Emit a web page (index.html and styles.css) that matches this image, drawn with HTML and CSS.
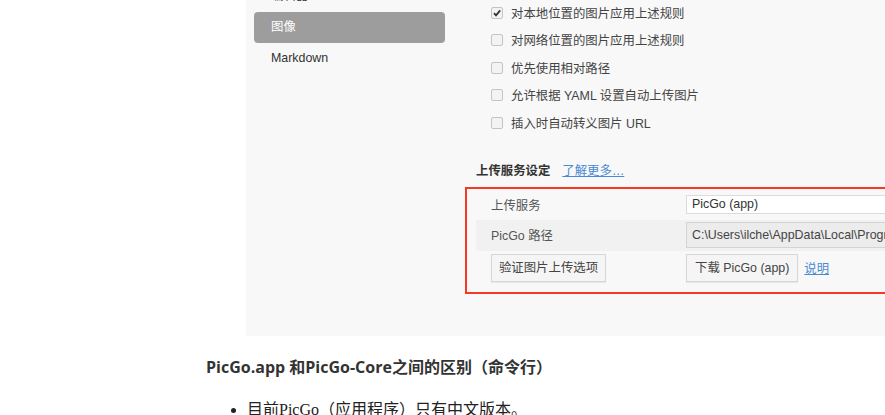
FILE: index.html
```html
<!DOCTYPE html>
<html lang="zh-CN">
<head>
<meta charset="utf-8">
<title>PicGo</title>
<link rel="stylesheet" href="styles.css">
</head>
<body>
<div class="article">
  <div class="shot">
    <div class="side">
      <div class="side-item">编辑器</div>
      <div class="side-item active">图像</div>
      <div class="side-item">Markdown</div>
    </div>
    <div class="main">
      <div class="checks">
        <div class="check-row"><span class="cb checked"><svg viewBox="0 0 12 12" width="12" height="12"><path d="M3 6.2 L5 8.3 L9.2 3.4" fill="none" stroke="#333" stroke-width="1.8"/></svg></span>对本地位置的图片应用上述规则</div>
        <div class="check-row"><span class="cb"></span>对网络位置的图片应用上述规则</div>
        <div class="check-row"><span class="cb"></span>优先使用相对路径</div>
        <div class="check-row"><span class="cb"></span>允许根据 YAML 设置自动上传图片</div>
        <div class="check-row"><span class="cb"></span>插入时自动转义图片 URL</div>
      </div>
      <div class="sec-head"><span class="sec-title">上传服务设定</span><a class="link">了解更多…</a></div>
      <div class="redbox">
        <div class="trow">
          <div class="tlabel">上传服务</div>
          <div class="tval"><div class="select">PicGo (app)</div></div>
        </div>
        <div class="trow alt">
          <div class="tlabel">PicGo 路径</div>
          <div class="tval"><div class="pathbox">C:\Users\ilche\AppData\Local\Programs\PicGo\PicGo.exe</div></div>
        </div>
        <div class="trow btnrow">
          <div class="tlabel"><span class="btn btn-wide">验证图片上传选项</span></div>
          <div class="tval"><span class="btn">下载 PicGo (app)</span><a class="link small">说明</a></div>
        </div>
      </div>
    </div>
  </div>
  <h4 class="heading">PicGo.app 和PicGo-Core之间的区别（命令行）</h4>
  <ul class="list">
    <li>目前PicGo（应用程序）只有中文版本。</li>
  </ul>
</div>
</body>
</html>
```
FILE: styles.css
```css
html, body {
  margin: 0;
  padding: 0;
  background: #ffffff;
  overflow: hidden;
}
body {
  width: 885px;
  height: 415px;
}
.article {
  margin-left: 206px;
}
.shot {
  margin-left: 40px;
  height: 336px;
  width: 700px;
  background: #f8f8f8;
  overflow: hidden;
  display: flex;
  font-family: "Liberation Sans", "Noto Sans CJK SC", sans-serif;
  font-size: 12.4px;
  color: #333;
}
.side {
  flex: none;
  width: 191px;
  padding: 0 8px;
  margin-top: -19px;
}
.side-item {
  height: 31px;
  line-height: 31px;
  padding-left: 17px;
  color: #333;
  border-radius: 4px;
}
.side-item.active {
  background: #9d9d9d;
  color: #ffffff;
}
.main {
  flex: 1;
  padding-left: 12px;
}
.checks {
  margin-top: -1px;
  padding-left: 26px;
}
.check-row {
  height: 27.5px;
  display: flex;
  align-items: center;
  gap: 8px;
  color: #444;
}
.cb {
  box-sizing: border-box;
  width: 12px;
  height: 12px;
  border: 1px solid #c4c4c4;
  border-radius: 2px;
  background: #f3f3f3;
  display: flex;
  align-items: center;
  justify-content: center;
}
.cb svg {
  display: block;
  margin: -1px;
}
.sec-head {
  margin-top: 22px;
  padding-left: 11px;
  height: 22px;
  display: flex;
  align-items: center;
  gap: 12px;
}
.sec-title {
  font-weight: bold;
  color: #333;
}
.link {
  color: #4a8ad4;
  text-decoration: underline;
}
.redbox {
  margin-top: 6px;
  border: 2px solid #f53a22;
  padding: 1px 0 6px 9px;
}
.trow {
  display: flex;
  align-items: center;
  height: 30px;
}
.trow.alt {
  background: #f1f1f1;
  height: 31px;
}
.trow.btnrow {
  height: 35px;
}
.tlabel {
  flex: none;
  width: 210px;
  padding-left: 15px;
  box-sizing: border-box;
  color: #555;
}
.tval {
  flex: 1;
  display: flex;
  align-items: center;
  gap: 6px;
}
.select {
  box-sizing: border-box;
  width: 260px;
  height: 19px;
  line-height: 17px;
  padding-left: 5px;
  border: 1px solid #dcdcdc;
  background: #ffffff;
  color: #333;
  white-space: nowrap;
}
.pathbox {
  box-sizing: border-box;
  width: 300px;
  height: 26px;
  line-height: 24px;
  padding-left: 5px;
  border: 1px solid #d4d4d4;
  background: #ececec;
  color: #444;
  white-space: nowrap;
  overflow: hidden;
}
.btn {
  box-sizing: border-box;
  display: inline-block;
  height: 28px;
  line-height: 26px;
  padding: 0 8px;
  border: 1px solid #d6d6d6;
  background: #f5f5f5;
  box-shadow: 0 1px 1px rgba(0, 0, 0, 0.06);
  color: #444;
  white-space: nowrap;
}
.btn-wide {
  width: 115px;
  text-align: center;
  padding: 0;
}
.heading {
  margin: 19px 0 0 0;
  font-family: "Open Sans", "Noto Sans CJK SC", sans-serif;
  font-weight: bold;
  font-size: 16px;
  line-height: 24px;
  color: #333;
}
.list {
  margin: 19px 0 0 0;
  padding-left: 41px;
  font-family: "Liberation Serif", "Noto Sans CJK SC", serif;
  font-size: 16px;
  line-height: 24px;
  color: #222;
}
```
